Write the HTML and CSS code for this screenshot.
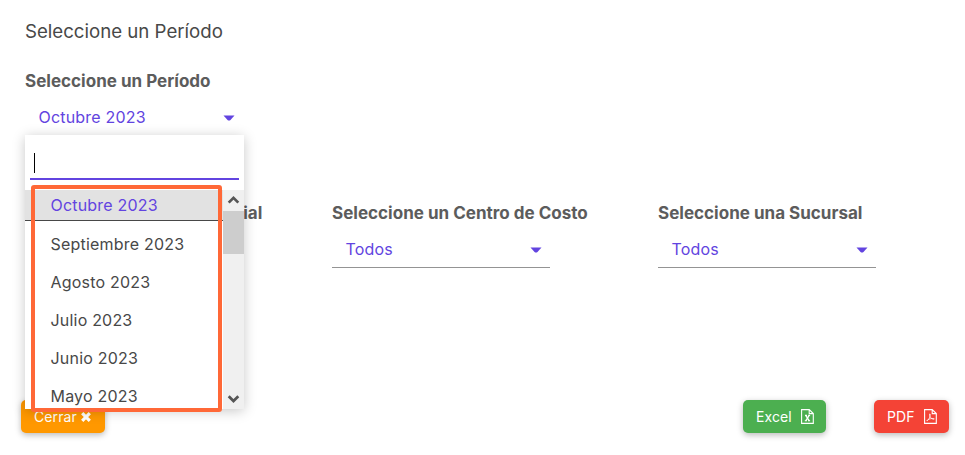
FILE: index.html
```html
<!DOCTYPE html>
<html lang="es">
<head>
<meta charset="utf-8">
<title>Seleccione un Período</title>
<link rel="stylesheet" href="styles.css">
</head>
<body>
<main class="page">
  <h1 class="title">Seleccione un Período</h1>
  <section class="field period">
    <label class="label">Seleccione un Período</label>
    <div class="select open"><span>Octubre 2023</span><svg class="caret" width="12" height="6" viewBox="0 0 12 6"><path d="M.5.5h11L7.5 5q-1.5 1-3 0z"/></svg>
      <div class="dropdown">
        <div class="search"><i class="cursor"></i></div>
        <div class="results">
          <ul class="options">
            <li class="selected">Octubre 2023</li>
            <li>Septiembre 2023</li>
            <li>Agosto 2023</li>
            <li>Julio 2023</li>
            <li>Junio 2023</li>
            <li>Mayo 2023</li>
          </ul>
          <div class="scrollbar">
            <svg width="21" height="21" viewBox="0 0 21 21"><path d="M5.7 12.6 10.5 7.8l4.8 4.8" /></svg>
            <div class="thumb"></div>
            <svg class="down" width="21" height="21" viewBox="0 0 21 21"><path d="M5.7 8.2l4.8 4.8 4.8-4.8" /></svg>
          </div>
        </div>
        <div class="highlight"></div>
      </div>
    </div>
  </section>
  <section class="filters">
    <div class="field"><label class="label">Seleccione una Razón Social</label></div>
    <div class="field"><label class="label">Seleccione un Centro de Costo</label>
      <div class="select"><span>Todos</span><svg class="caret" width="12" height="6" viewBox="0 0 12 6"><path d="M.5.5h11L7.5 5q-1.5 1-3 0z"/></svg></div></div>
    <div class="field"><label class="label">Seleccione una Sucursal</label>
      <div class="select"><span>Todos</span><svg class="caret" width="12" height="6" viewBox="0 0 12 6"><path d="M.5.5h11L7.5 5q-1.5 1-3 0z"/></svg></div></div>
  </section>
  <footer class="actions">
    <button class="btn close">Cerrar
      <svg width="12" height="12" viewBox="0 0 12 12"><path d="M2.2 2.2l7.6 7.6M9.8 2.2 2.2 9.8" stroke="#fff" stroke-width="3.2"/></svg>
    </button>
    <button class="btn excel">Excel
      <svg width="13" height="15" viewBox="0 0 13 15" fill="none" stroke="#fff" stroke-width="1.1"><path d="M.6.6h7.6l4.1 4v9.8H.6zM8.2.6v4h4.1M4 6.4h2M7.3 6.4h1.8M3.8 11.8h2M7 11.8h2.1"/><path d="M4.7 6.4l3.6 5.4M8.2 6.4l-3.5 5.4" stroke-width="1.3"/></svg>
    </button>
    <button class="btn pdf">PDF
      <svg width="13" height="15" viewBox="0 0 13 15" fill="none" stroke="#fff" stroke-width="1.1"><path d="M.6.6h7.6l4.1 4v9.8H.6zM8.2.6v4h4.1"/><path d="M5.9 4.8c-.6 0-.5 1.4 0 2.6.6 1.4 1.9 2.6 3.8 2.9.8 0 .8-.7 0-.8-2-.2-4.6.4-6.2 1.4-.9.7-.7 1.3-.1.8 1.3-1.1 2.5-3.3 2.8-5.1.1-.9.1-1.8-.3-1.8z" stroke-width=".8"/></svg>
    </button>
  </footer>
</main>
</body>
</html>
```
FILE: styles.css
```css
* { box-sizing: border-box; }
body { margin: 0; background: #fff; color: #484848; font-family: Inter, "Liberation Sans", sans-serif; }
.page { height: 455px; padding: 19px 16px 22px 25px; display: flex; flex-direction: column; overflow: hidden; }
.title { margin: 0; font-size: 18.65px; line-height: 24px; font-weight: 400; }
.label { display: block; font-size: 17.05px; line-height: 20px; font-weight: 700; color: #5c5c5c; white-space: nowrap; }
.period { margin-top: 28px; }
.select { position: relative; width: 218px; height: 36px; margin-top: 9px; padding: 0 8px 2px 13.5px; display: flex; align-items: center; justify-content: space-between; border-bottom: 1px solid #949494; color: #6244e0; font-size: 16px; letter-spacing: .2px; }
.select.open { border-color: transparent; }
.caret { fill: #6244e0; margin-top: 2px; }
.dropdown { position: absolute; z-index: 2; left: 0; top: 35px; width: 219px; height: 274px; background: #fff; color: #484848; box-shadow: 0 2px 12px rgba(0,0,0,.22); }
.search { height: 45px; margin: 0 5px 10px; padding: 18px 0 0 4px; border-bottom: 2px solid #6244e0; }
.cursor { display: block; width: 1px; height: 20px; background: #000; }
.results { display: flex; height: 219px; overflow: hidden; }
.options { flex: 1; margin: 0; padding: 0; list-style: none; }
.options li { height: 38.1px; padding-left: 25.5px; line-height: 38px; white-space: nowrap; }
.options .selected { height: 31px; margin-bottom: 4px; line-height: 30px; color: #6244e0; background: #e2e2e2; border-bottom: 1px solid #484848; }
.scrollbar { width: 21px; background: #f0f0f0; display: flex; flex-direction: column; }
.scrollbar svg { flex: none; fill: none; stroke: #555; stroke-width: 2.7; }
.thumb { height: 43px; background: #cdcdcd; }
.down { margin-top: auto; }
.highlight { position: absolute; left: 6px; top: 49.5px; width: 191px; height: 227px; border: 4px solid #ff6837; border-radius: 3px; }
.filters { margin-top: 67px; display: grid; grid-template-columns: 307px 326px 1fr; }
.actions { margin: auto 0 0 -4px; display: flex; align-items: center; }
.btn { height: 33px; border: 0; border-radius: 5px; padding: 0 12.5px 0 13px; display: flex; align-items: center; justify-content: space-between; font: 400 14px Inter, "Liberation Sans", sans-serif; letter-spacing: .1px; color: #fff; box-shadow: 0 2px 6px rgba(0,0,0,.28); }
.close { width: 84px; background: #ff9800; padding-right: 13px; }
.excel { width: 83px; margin-left: auto; margin-right: 48px; background: #4caf50; }
.pdf { width: 75px; background: #f44336; }
```
